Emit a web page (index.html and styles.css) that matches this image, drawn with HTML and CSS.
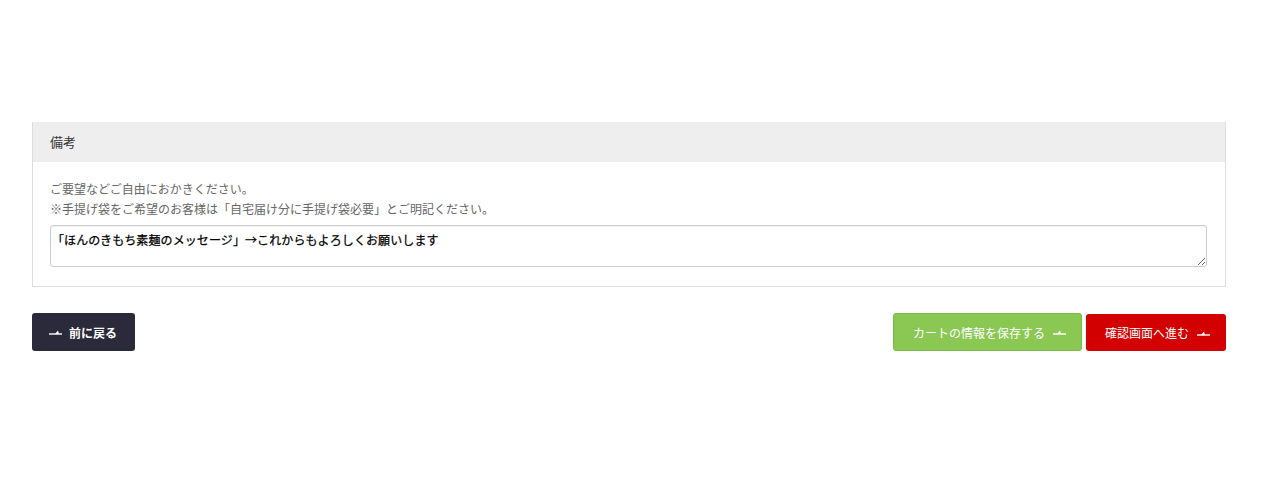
FILE: index.html
```html
<!DOCTYPE html>
<html lang="ja">
<head>
<meta charset="utf-8">
<link rel="stylesheet" href="styles.css">
</head>
<body>
<div class="wrap">
  <section class="panel">
    <div class="panel-head">備考</div>
    <div class="panel-body">
      <p class="note">ご要望などご自由におかきください。<br>※手提げ袋をご希望のお客様は「自宅届け分に手提げ袋必要」とご明記ください。</p>
      <textarea class="memo">「ほんのきもち素麺のメッセージ」→これからもよろしくお願いします</textarea>
    </div>
  </section>
  <div class="actions">
    <button class="btn btn-back"><svg class="ico" width="13" height="6" viewBox="0 0 13 6"><path d="M0 5h13" stroke="#fff" stroke-width="1.4"/><path d="M6 5 L9 1.5 L10 5z" fill="#fff"/></svg>前に戻る</button>
    <div class="right">
      <button class="btn btn-save">カートの情報を保存する<svg class="ico r" width="13" height="6" viewBox="0 0 13 6"><path d="M0 5h13" stroke="#fff" stroke-width="1.4"/><path d="M4 5 L7 1.5 L8 5z" fill="#fff"/></svg></button>
      <button class="btn btn-next">確認画面へ進む<svg class="ico r" width="13" height="6" viewBox="0 0 13 6"><path d="M0 5h13" stroke="#fff" stroke-width="1.4"/><path d="M4 5 L7 1.5 L8 5z" fill="#fff"/></svg></button>
    </div>
  </div>
</div>
</body>
</html>
```
FILE: styles.css
```css
* { box-sizing: border-box; }
body {
  margin: 0;
  background: #fff;
  font-family: "Noto Sans CJK JP", "Noto Sans", sans-serif;
}
.wrap {
  padding: 122px 54px 0 32px;
}
.panel {
  border: 1px solid #ddd;
  border-top: none;
}
.panel-head {
  background: #eeeeee;
  height: 40px;
  padding: 0 0 0 17px;
  font-size: 13px;
  line-height: 40px;
  color: #333;
}
.panel-body {
  padding: 17px 18px 19px 17px;
}
.note {
  margin: 0 0 6px;
  font-size: 12px;
  line-height: 20px;
  color: #666;
}
.memo {
  display: block;
  width: 100%;
  height: 42px;
  border: 1px solid #ccc;
  border-radius: 3px;
  padding: 4px 0 4px 1px;
  font-family: "Noto Sans CJK JP", serif;
  font-size: 12px;
  line-height: 20px;
  font-weight: 400;
  letter-spacing: 0.1px;
  color: #000;
  -webkit-text-stroke: 0.25px #000;
  resize: vertical;
  box-shadow: inset 0 1px 1px rgba(0,0,0,0.05);
}
.actions {
  display: flex;
  justify-content: space-between;
  margin-top: 26px;
}
.right {
  display: flex;
  gap: 4px;
}
.btn {
  display: flex;
  align-items: center;
  height: 38px;
  border: none;
  border-radius: 3px;
  color: #fff;
  font-family: "Noto Sans CJK JP", sans-serif;
  font-size: 12px;
  font-weight: 700;
  cursor: pointer;
}
.btn-back {
  background: #2b2a3a;
  width: 103px;
  padding: 0 0 0 17px;
}
.btn-save {
  background: #8bc853;
  width: 189px;
  padding: 0 0 0 19px;
  font-weight: 400;
  border: 1px solid #7bb845;
}
.btn-next {
  background: #d20000;
  width: 140px;
  padding: 0 0 0 19px;
  margin-top: 1px;
  height: 37px;
  font-weight: 400;
}
.ico { margin-right: 7px; }
.ico.r { margin: 0 0 0 8px; }
```
